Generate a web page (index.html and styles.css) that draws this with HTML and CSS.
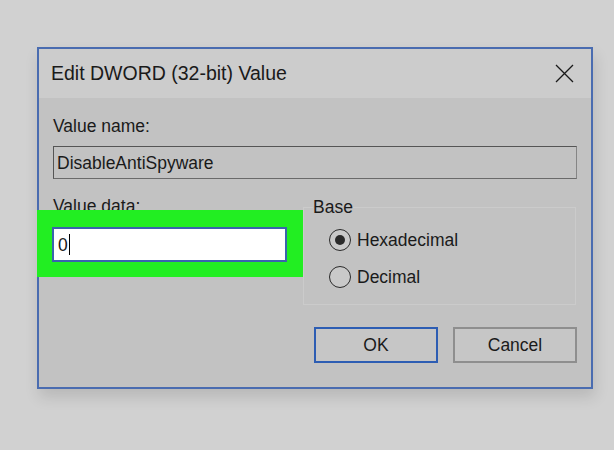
FILE: index.html
```html
<!DOCTYPE html>
<html lang="en">
<head>
  <meta charset="UTF-8">
  <title>Edit DWORD (32-bit) Value</title>
  <link rel="stylesheet" href="styles.css">
</head>
<body>
  <div class="dialog">
    <div class="titlebar">
      <span class="title">Edit DWORD (32-bit) Value</span>
      <svg class="close" width="19" height="19" viewBox="0 0 19 19">
        <path d="M1 1 L18 18 M18 1 L1 18" stroke="#1a1a1a" stroke-width="1.3" fill="none"/>
      </svg>
    </div>
    <div class="content">
      <div class="label">Value name:</div>
      <div class="field name-field">DisableAntiSpyware</div>
      <div class="row">
        <div class="data-col">
          <div class="label">Value data:</div>
          <div class="highlight">
            <div class="field data-field">0<span class="caret"></span></div>
          </div>
        </div>
        <fieldset class="base">
          <legend>Base</legend>
          <div class="radio-row">
            <span class="radio checked"></span>
            <span>Hexadecimal</span>
          </div>
          <div class="radio-row">
            <span class="radio"></span>
            <span>Decimal</span>
          </div>
        </fieldset>
      </div>
      <div class="buttons">
        <button class="btn default">OK</button>
        <button class="btn">Cancel</button>
      </div>
    </div>
  </div>
</body>
</html>
```

FILE: styles.css
```css
body {
  margin: 0;
  padding: 47px 0 0 37px;
  background: #d1d1d1;
  font-family: "Liberation Sans", Arial, sans-serif;
  color: #1a1a1a;
  height: 450px;
  box-sizing: border-box;
  overflow: hidden;
}
.dialog {
  width: 556px;
  height: 342px;
  box-sizing: border-box;
  border: 2px solid #4a6cb0;
  background: #c2c2c2;
  box-shadow: 2px 8px 14px rgba(0, 0, 0, 0.12);
}
.titlebar {
  height: 49px;
  background: #cccccc;
  display: flex;
  align-items: center;
  justify-content: space-between;
  padding-left: 12px;
}
.title {
  font-size: 19.5px;
}
.close {
  margin-right: 17px;
}
.content {
  padding: 18px 14px 0 14px;
  font-size: 17.5px;
}
.label {
  line-height: 20px;
}
.field {
  box-sizing: border-box;
  line-height: 20px;
  padding-left: 3px;
}
.name-field {
  margin-top: 10px;
  height: 33px;
  padding-top: 6px;
  border: 1px solid #555555;
  border-right-color: #858585;
  border-bottom-color: #6a6a6a;
}
.row {
  display: flex;
  align-items: flex-start;
  margin-top: 17px;
}
.data-col {
  width: 250px;
}
.highlight {
  position: relative;
  margin: -6px 0 0 -16px;
  width: 266px;
  box-sizing: border-box;
  padding: 17px 16px 15px 15px;
  background: #22ee22;
}
.data-field {
  height: 35px;
  padding: 6px 0 0 4px;
  background: #ffffff;
  border: 2px solid #3a63ad;
  display: flex;
  align-items: flex-start;
}
.caret {
  display: inline-block;
  width: 1px;
  height: 21px;
  margin-top: -1px;
  margin-left: 1px;
  background: #000000;
}
.base {
  width: 273px;
  box-sizing: border-box;
  margin: 1px 0 0 0;
  padding: 12px 0 15px 25px;
  border: 1px solid #cbcbcb;
  height: 108px;
}
.base legend {
  padding: 0;
  margin-left: -16px;
  line-height: 20px;
}
.radio-row {
  display: flex;
  align-items: center;
  gap: 6px;
  height: 22px;
  line-height: 20px;
}
.radio-row + .radio-row {
  margin-top: 15px;
}
.radio {
  width: 22px;
  height: 22px;
  box-sizing: border-box;
  border: 1.5px solid #2a2a2a;
  border-radius: 50%;
  background: #c9c9c9;
  display: flex;
  align-items: center;
  justify-content: center;
}
.radio.checked::after {
  content: "";
  width: 10px;
  height: 10px;
  border-radius: 50%;
  background: #2a2a2a;
}
.buttons {
  display: flex;
  justify-content: flex-end;
  gap: 15px;
  margin-top: 22px;
}
.btn {
  width: 124px;
  height: 36px;
  font-family: inherit;
  font-size: 17.5px;
  color: #1a1a1a;
  background: #c6c6c6;
  border: 2px solid #8e8e8e;
  padding: 0;
}
.btn.default {
  border-color: #2d5db3;
}
```
